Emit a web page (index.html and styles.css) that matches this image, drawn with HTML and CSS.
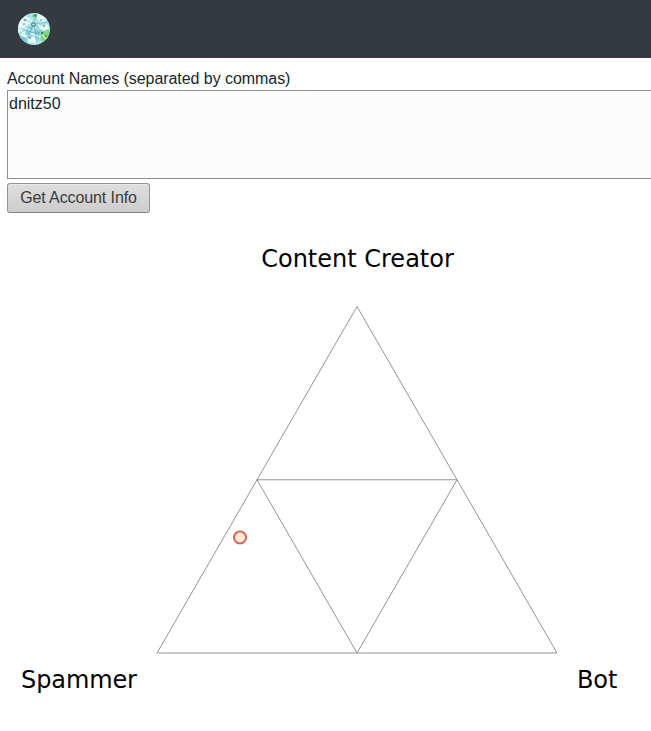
FILE: index.html
```html
<!DOCTYPE html>
<html lang="en">
<head>
<meta charset="utf-8">
<title>Account Info</title>
<link rel="stylesheet" href="styles.css">
</head>
<body>
<header class="navbar">
  <svg class="logo" viewBox="0 0 32 32" aria-hidden="true">
    <defs><clipPath id="disc"><circle cx="16" cy="16" r="16"/></clipPath></defs>
    <g clip-path="url(#disc)">
      <rect width="32" height="32" fill="#a9e3e8"/>
      <path d="M0 8L8 3L15 9L6 14L0 21ZM18 0L30 5L26 9L20 8ZM3 17L11 16L9 24L3 24ZM20 14L30 11L31 17L25 18ZM9 29L16 22L20 31Z" fill="#e0fafa"/>
      <path d="M9 14L15 14L12 22L7 22ZM17 16L22 18L21 27L17 24ZM1 22L8 25L10 31L3 30Z" fill="#7fcbd7"/>
      <path d="M22 20L26 18L31 16L31 24L26 29L22 27L24 23Z" fill="#82db78"/>
      <path d="M14 2L20 1L18 5L14 4Z" fill="#83d679"/>
      <path d="M15 12L3 20M15 12L9 27M16 12L19 31M17 12L28 22M17 11L31 9M14 10L5 6M16 9L19 1M1 15L10 19L21 20L27 28M4 26L15 23L25 17" fill="none" stroke="#55a3b3" stroke-width=".5"/>
      <path d="M2 12L12 17M6 4L13 6M20 12L25 15M12 20L22 24M4 22L13 28M24 22L28 26" fill="none" stroke="#f4ffff" stroke-width=".9"/>
      <circle cx="15.5" cy="11.5" r="1.8" fill="#b9edf2" stroke="#245f70"/>
      <g fill="#28515c"><circle cx="17" cy="2.5" r=".9"/><circle cx="7" cy="7" r=".8"/><circle cx="6" cy="11" r=".7"/><circle cx="26" cy="13" r=".8"/><circle cx="24" cy="20" r=".9"/><circle cx="28" cy="23" r=".8"/><circle cx="12" cy="25" r=".6"/><circle cx="23" cy="7" r=".7"/></g>
    </g>
  </svg>
</header>
<main class="content">
  <label class="field-label" for="accounts">Account Names (separated by commas)</label>
  <textarea class="accounts" id="accounts" spellcheck="false">dnitz50</textarea>
  <button class="submit" type="button">Get Account Info</button>
</main>
<svg class="chart" viewBox="0 0 651 518">
  <g class="grid">
    <path d="M357 93.5L157 440H557Z"/>
    <path d="M257 266.75H457L357 440Z"/>
  </g>
  <circle class="point" cx="240" cy="324.5" r="6"/>
  <g class="corner">
    <text x="357.5" y="54" text-anchor="middle">Content Creator</text>
    <text class="tight" x="21" y="475">Spammer</text>
    <text class="tight" x="577" y="475">Bot</text>
  </g>
</svg>
</body>
</html>
```
FILE: styles.css
```css
body {
  margin: 0;
  background: #fff;
  color: #212529;
  font: 16px/24px "Liberation Sans", Arial, sans-serif;
  overflow: hidden;
}
.navbar {
  display: flex;
  align-items: center;
  height: 58px;
  padding-left: 18px;
  box-sizing: border-box;
  background: #343a40;
}
.logo {
  width: 32px;
  height: 32px;
}
.content {
  display: flex;
  flex-direction: column;
  align-items: flex-start;
  height: 155px;
  padding: 9px 0 0 7px;
  box-sizing: border-box;
}
.field-label {
  height: 23px;
  letter-spacing: -0.06px;
}
.accounts {
  width: 100%;
  height: 89px;
  box-sizing: border-box;
  margin: 0 0 4px;
  padding: 1px 1px 0;
  border: 1px solid #8f8f8f;
  border-right: 0;
  border-radius: 0;
  background: #fcfcfc;
  color: #212529;
  font: inherit;
  resize: none;
  outline: none;
}
.submit {
  width: 143px;
  height: 30px;
  padding: 0;
  border: 1px solid #949494;
  border-bottom-color: #858585;
  border-radius: 3px;
  background: linear-gradient(#dedede, #cdcdcd);
  box-shadow: inset 0 1px #e9e9e9;
  color: #3b3b3b;
  font: inherit;
  line-height: 28px;
  letter-spacing: -0.1px;
}
.chart {
  display: block;
  width: 100%;
  height: 518px;
}
.grid {
  fill: none;
  stroke: #888;
  stroke-width: 0.9;
}
.point {
  fill: #fdebd5;
  stroke: #d9655c;
  stroke-width: 2;
}
.corner {
  fill: #000;
  font: 24px "DejaVu Sans", sans-serif;
}
.tight {
  letter-spacing: -0.1px;
}
```
